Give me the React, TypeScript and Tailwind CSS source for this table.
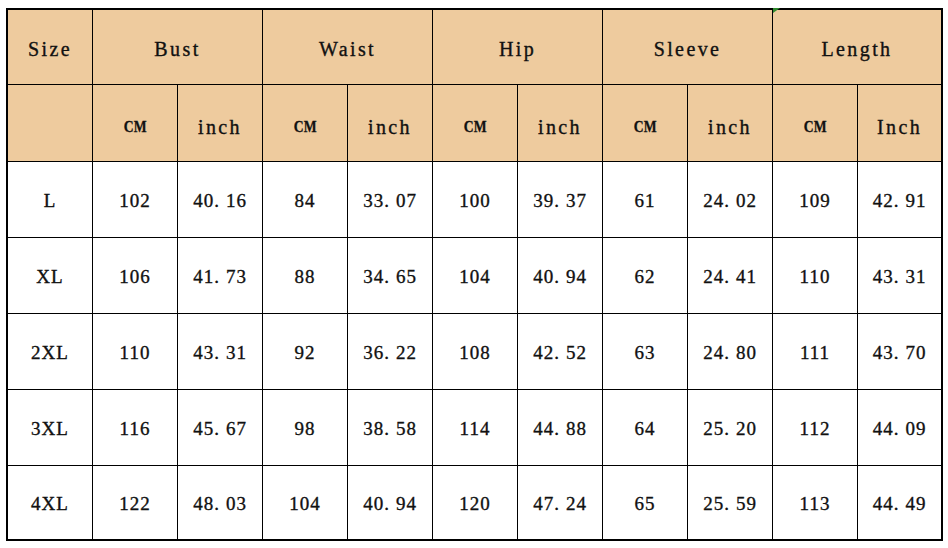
import React from 'react';

const GROUPS = ['Bust', 'Waist', 'Hip', 'Sleeve', 'Length'];
const UNITS = ['CM', 'inch', 'CM', 'inch', 'CM', 'inch', 'CM', 'inch', 'CM', 'Inch'];

const ROWS: string[][] = [
  ['L', '102', '40.16', '84', '33.07', '100', '39.37', '61', '24.02', '109', '42.91'],
  ['XL', '106', '41.73', '88', '34.65', '104', '40.94', '62', '24.41', '110', '43.31'],
  ['2XL', '110', '43.31', '92', '36.22', '108', '42.52', '63', '24.80', '111', '43.70'],
  ['3XL', '116', '45.67', '98', '38.58', '114', '44.88', '64', '25.20', '112', '44.09'],
  ['4XL', '122', '48.03', '104', '40.94', '120', '47.24', '65', '25.59', '113', '44.49'],
];

const serif = "font-['Liberation_Serif',_'Times_New_Roman',_serif]";

// renders "40.16" with the wide dot gap of the original chart font
function Num({ v }: { v: string }) {
  const [a, b] = v.split('.');
  if (b === undefined) return <>{v}</>;
  return (
    <>
      {a}
      <span className="pr-[6px]">.</span>
      {b}
    </>
  );
}

export default function App() {
  return (
    <div className={`w-[948px] h-[548px] bg-white pt-[8px] pl-[6px] text-[#111] [-webkit-text-stroke:0.35px_#111] ${serif}`}>
      <div className="w-[937px] border-2 border-black">
        <div className="grid grid-cols-[repeat(10,85px)_83px] grid-rows-[75px_77px_repeat(4,76px)_73px]">
          {/* header row 1 */}
          <div className="bg-[#eecb9e] border-r border-b border-black flex items-center justify-center pt-[4px] text-[20px] tracking-[2.4px]">
            Size
          </div>
          {GROUPS.map((g, i) => (
            <div
              key={g}
              className={`relative col-span-2 bg-[#eecb9e] border-b border-black flex items-center justify-center pt-[4px] text-[20px] tracking-[2.4px] ${
                i < GROUPS.length - 1 ? 'border-r' : ''
              }`}
            >
              {g}
              {g === 'Length' && (
                <span className="absolute left-0 top-[-2px] w-0 h-0 border-t-[5px] border-t-[#2f8a2f] border-r-[7px] border-r-transparent" />
              )}
            </div>
          ))}

          {/* header row 2 */}
          <div className="bg-[#eecb9e] border-r border-b border-black" />
          {UNITS.map((u, i) => (
            <div
              key={i}
              className={`bg-[#eecb9e] border-b border-black flex items-center justify-center pt-[8px] ${
                i < UNITS.length - 1 ? 'border-r' : ''
              } ${u === 'CM' ? 'text-[17px] font-bold' : 'text-[20px] tracking-[2.4px]'}`}
            >
              {u === 'CM' ? <span className="inline-block scale-x-[0.8]">{u}</span> : u}
            </div>
          ))}

          {/* data */}
          {ROWS.map((row, r) =>
            row.map((c, i) => (
              <div
                key={`${r}-${i}`}
                className={`flex items-center justify-center pt-[4px] text-[19px] tracking-[1px] border-black ${
                  i < row.length - 1 ? 'border-r' : ''
                } ${r < ROWS.length - 1 ? 'border-b' : ''}`}
              >
                <Num v={c} />
              </div>
            ))
          )}
        </div>
      </div>
    </div>
  );
}
